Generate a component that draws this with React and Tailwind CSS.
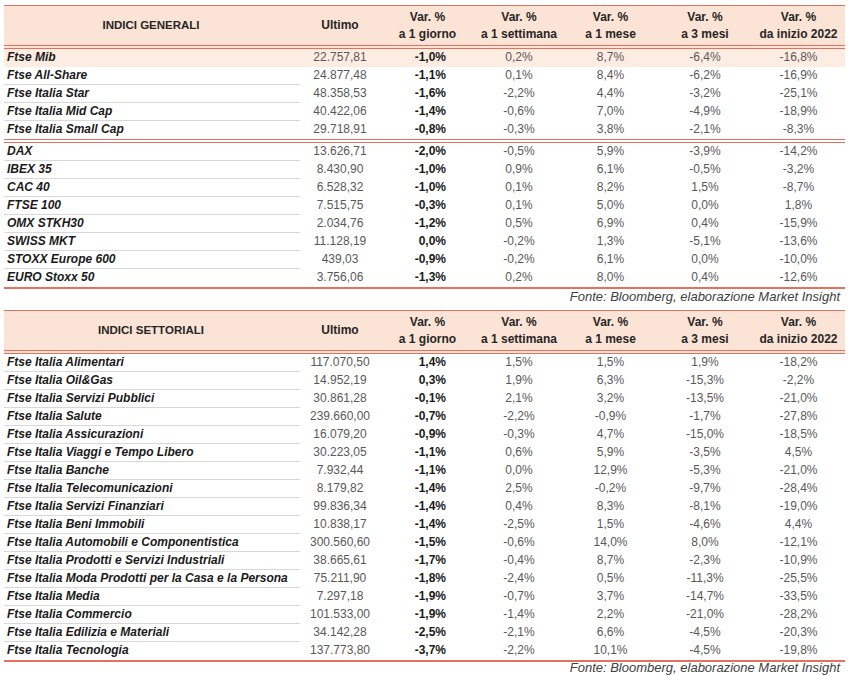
import React from "react";

const COLS = "grid grid-cols-[296px_80px_95px_88px_95px_94px_93px]";

const generali1 = [
  ["Ftse Mib", "22.757,81", "-1,0%", "0,2%", "8,7%", "-6,4%", "-16,8%"],
  ["Ftse All-Share", "24.877,48", "-1,1%", "0,1%", "8,4%", "-6,2%", "-16,9%"],
  ["Ftse Italia Star", "48.358,53", "-1,6%", "-2,2%", "4,4%", "-3,2%", "-25,1%"],
  ["Ftse Italia Mid Cap", "40.422,06", "-1,4%", "-0,6%", "7,0%", "-4,9%", "-18,9%"],
  ["Ftse Italia Small Cap", "29.718,91", "-0,8%", "-0,3%", "3,8%", "-2,1%", "-8,3%"],
];
const generali2 = [
  ["DAX", "13.626,71", "-2,0%", "-0,5%", "5,9%", "-3,9%", "-14,2%"],
  ["IBEX 35", "8.430,90", "-1,0%", "0,9%", "6,1%", "-0,5%", "-3,2%"],
  ["CAC 40", "6.528,32", "-1,0%", "0,1%", "8,2%", "1,5%", "-8,7%"],
  ["FTSE 100", "7.515,75", "-0,3%", "0,1%", "5,0%", "0,0%", "1,8%"],
  ["OMX STKH30", "2.034,76", "-1,2%", "0,5%", "6,9%", "0,4%", "-15,9%"],
  ["SWISS MKT", "11.128,19", "0,0%", "-0,2%", "1,3%", "-5,1%", "-13,6%"],
  ["STOXX Europe 600", "439,03", "-0,9%", "-0,2%", "6,1%", "0,0%", "-10,0%"],
  ["EURO Stoxx 50", "3.756,06", "-1,3%", "0,2%", "8,0%", "0,4%", "-12,6%"],
];
const settoriali = [
  ["Ftse Italia Alimentari", "117.070,50", "1,4%", "1,5%", "1,5%", "1,9%", "-18,2%"],
  ["Ftse Italia Oil&Gas", "14.952,19", "0,3%", "1,9%", "6,3%", "-15,3%", "-2,2%"],
  ["Ftse Italia Servizi Pubblici", "30.861,28", "-0,1%", "2,1%", "3,2%", "-13,5%", "-21,0%"],
  ["Ftse Italia Salute", "239.660,00", "-0,7%", "-2,2%", "-0,9%", "-1,7%", "-27,8%"],
  ["Ftse Italia Assicurazioni", "16.079,20", "-0,9%", "-0,3%", "4,7%", "-15,0%", "-18,5%"],
  ["Ftse Italia Viaggi e Tempo Libero", "30.223,05", "-1,1%", "0,6%", "5,9%", "-3,5%", "4,5%"],
  ["Ftse Italia Banche", "7.932,44", "-1,1%", "0,0%", "12,9%", "-5,3%", "-21,0%"],
  ["Ftse Italia Telecomunicazioni", "8.179,82", "-1,4%", "2,5%", "-0,2%", "-9,7%", "-28,4%"],
  ["Ftse Italia Servizi Finanziari", "99.836,34", "-1,4%", "0,4%", "8,3%", "-8,1%", "-19,0%"],
  ["Ftse Italia Beni Immobili", "10.838,17", "-1,4%", "-2,5%", "1,5%", "-4,6%", "4,4%"],
  ["Ftse Italia Automobili e Componentistica", "300.560,60", "-1,5%", "-0,6%", "14,0%", "8,0%", "-12,1%"],
  ["Ftse Italia Prodotti e Servizi Industriali", "38.665,61", "-1,7%", "-0,4%", "8,7%", "-2,3%", "-10,9%"],
  ["Ftse Italia Moda Prodotti per la Casa e la Persona", "75.211,90", "-1,8%", "-2,4%", "0,5%", "-11,3%", "-25,5%"],
  ["Ftse Italia Media", "7.297,18", "-1,9%", "-0,7%", "3,7%", "-14,7%", "-33,5%"],
  ["Ftse Italia Commercio", "101.533,00", "-1,9%", "-1,4%", "2,2%", "-21,0%", "-28,2%"],
  ["Ftse Italia Edilizia e Materiali", "34.142,28", "-2,5%", "-2,1%", "6,6%", "-4,5%", "-20,3%"],
  ["Ftse Italia Tecnologia", "137.773,80", "-3,7%", "-2,2%", "10,1%", "-4,5%", "-19,8%"],
];

function Header({ title }) {
  return (
    <div className={`${COLS} h-[44px] bg-[#fbe4d6] border-t border-[#e4705e] border-b-[4px] border-double border-b-[#e4705e] text-[12px] font-bold text-[#262626] leading-[17px]`}>
      <div className="flex items-center justify-center text-[11.5px] pr-[2px]">{title}</div>
      <div className="flex items-center justify-center">Ultimo</div>
      {["a 1 giorno", "a 1 settimana", "a 1 mese", "a 3 mesi", "da inizio 2022"].map((s) => (
        <div key={s} className="flex flex-col items-center justify-center">
          <span>Var. %</span>
          <span>{s}</span>
        </div>
      ))}
    </div>
  );
}

function Row({ r, last, highlight }) {
  return (
    <div className={`${COLS} h-[18px] text-[12px] leading-[17px] ${highlight ? "bg-[#fcece2]" : ""}`}>
      <div className={`pl-[3px] font-bold italic text-[#1a1a1a] ${last || highlight ? "" : "border-b border-[#d8d8d8]"}`}>{r[0]}</div>
      <div className="text-center text-[#595959]">{r[1]}</div>
      <div className="text-right pr-[29px] font-bold text-[#1a1a1a]">{r[2]}</div>
      <div className="text-center text-[#595959]">{r[3]}</div>
      <div className="text-center text-[#595959]">{r[4]}</div>
      <div className="text-center text-[#595959]">{r[5]}</div>
      <div className="text-center text-[#595959]">{r[6]}</div>
    </div>
  );
}

function Fonte({ h }) {
  return (
    <div className={`${h} flex items-center justify-end pr-[5px] italic text-[13px] leading-[14px] text-[#404040]`}>
      Fonte: Bloomberg, elaborazione Market Insight
    </div>
  );
}

export default function App() {
  return (
    <div className="w-[848px] h-[676px] bg-white overflow-hidden pt-[5px] pl-[4px] font-['Liberation_Sans',Arial,sans-serif]">
      <div className="w-[841px]">
        <Header title="INDICI GENERALI" />
        {generali1.map((r, i) => (
          <Row key={r[0]} r={r} highlight={i === 0} last={i === generali1.length - 1} />
        ))}
        <div className="h-[4px] border-t border-b border-[#e4705e]" />
        {generali2.map((r, i) => (
          <Row key={r[0]} r={r} last={i === generali2.length - 1} />
        ))}
        <div className="h-[2px] bg-[#e4705e]" />
        <Fonte h="h-[16px]" />
        <div className="h-[5px]" />
        <Header title="INDICI SETTORIALI" />
        {settoriali.map((r, i) => (
          <Row key={r[0]} r={r} last={i === settoriali.length - 1} />
        ))}
        <div className="h-[2px] bg-[#e4705e]" />
        <Fonte h="h-[12px]" />
      </div>
    </div>
  );
}
